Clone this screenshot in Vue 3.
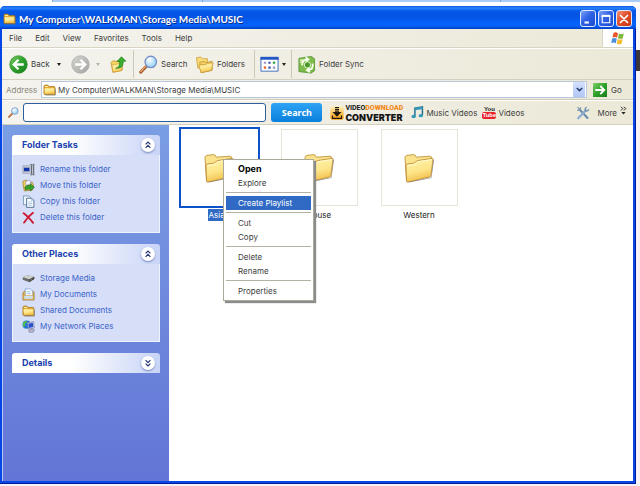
<script setup>
import { ref } from 'vue'

const path = 'My Computer\\WALKMAN\\Storage Media\\MUSIC'
const address = ref(path)
const query = ref('')
const menus = ['File', 'Edit', 'View', 'Favorites', 'Tools', 'Help']
const panels = [
  {
    title: 'Folder Tasks',
    open: true,
    items: [
      { icon: 'rename', label: 'Rename this folder' },
      { icon: 'move', label: 'Move this folder' },
      { icon: 'copy', label: 'Copy this folder' },
      { icon: 'delete', label: 'Delete this folder' },
    ],
  },
  {
    title: 'Other Places',
    open: true,
    items: [
      { icon: 'drive', label: 'Storage Media' },
      { icon: 'docs', label: 'My Documents' },
      { icon: 'folder', label: 'Shared Documents' },
      { icon: 'network', label: 'My Network Places' },
    ],
  },
  { title: 'Details', open: false, items: [] },
]
const folders = [
  { name: 'Asian', selected: true },
  { name: 'House', selected: false },
  { name: 'Western', selected: false },
]
const contextMenu = [
  [{ label: 'Open', bold: true }, { label: 'Explore' }],
  [{ label: 'Create Playlist', active: true }],
  [{ label: 'Cut' }, { label: 'Copy' }],
  [{ label: 'Delete' }, { label: 'Rename' }],
  [{ label: 'Properties' }],
]
</script>

<template>
  <div class="desktop">
    <svg class="defs" width="0" height="0" aria-hidden="true">
      <defs>
        <linearGradient id="gold" x1="0" y1="0" x2="0.3" y2="1">
          <stop offset="0" stop-color="#fff6b0" />
          <stop offset="0.6" stop-color="#fde58a" />
          <stop offset="1" stop-color="#f2c14c" />
        </linearGradient>
        <linearGradient id="green" x1="0" y1="0" x2="1" y2="1">
          <stop offset="0" stop-color="#7fd067" />
          <stop offset="0.5" stop-color="#2fa02c" />
          <stop offset="1" stop-color="#15801a" />
        </linearGradient>
        <linearGradient id="grey" x1="0" y1="0" x2="1" y2="1">
          <stop offset="0" stop-color="#d6d6d2" />
          <stop offset="1" stop-color="#a3a3a0" />
        </linearGradient>
        <linearGradient id="orange" x1="0" y1="0" x2="0" y2="1">
          <stop offset="0" stop-color="#fff0b8" />
          <stop offset="1" stop-color="#f79a08" />
        </linearGradient>
        <radialGradient id="lens" cx="0.4" cy="0.35" r="0.7">
          <stop offset="0" stop-color="#f4fcff" />
          <stop offset="1" stop-color="#8fccf5" />
        </radialGradient>
        <symbol id="i-folder" viewBox="0 0 14 14">
          <path d="M1 4Q1 2.2 2.3 2.2H5.2L6.5 3.7H12Q12.8 3.7 12.8 4.6V11.5Q12.8 12.4 12 12.4H2Q1 12.4 1 11.4Z" fill="#e3a838" stroke="#9b6a12" stroke-width=".7" />
          <path d="M1.6 5.6H12.2V11.7H2.2Z" fill="url(#gold)" />
          <path d="M2 3.2H5L5.8 4.3H2Z" fill="#fff0a0" />
          <path d="M2.5 13H13.4V6" fill="none" stroke="#77705a" stroke-width=".7" />
        </symbol>
        <symbol id="i-bigfolder" viewBox="0 0 32 32">
          <path d="M6 30.5 28.5 26 31 8 30 7 28 25.5 5 29.6Z" fill="#6f7392" opacity=".75" />
          <path d="M2 5.6Q2 3.8 4 3.4L10.5 2.6Q12.5 2.5 13.3 5.2L27 4.2Q28.6 4.2 28.5 6L26.8 23 3.5 29Z" fill="#fae38c" stroke="#b98a2a" stroke-width=".8" />
          <path d="M3 13.5 4.2 12 10.5 11.3 14.6 8.6 29.2 6.3Q30.2 6.3 30 7.4L27.9 23.6Q27.7 24.6 26.8 24.9L5 30Q3.7 30.2 3.6 29Z" fill="url(#gold)" stroke="#b7832a" stroke-width=".8" />
          <path d="M4.2 13.6 11 12.4 15 9.7 28.8 7.6" fill="none" stroke="#fffbd6" stroke-width=".9" />
        </symbol>
        <symbol id="i-rename" viewBox="0 0 14 14">
          <path d="M1 3H9V11H1Z" fill="#d4d5db" stroke="#858999" stroke-width=".7" />
          <path d="M2 5H8V9H2Z" fill="#1434a8" />
          <path d="M9 1.5H13.4V12.8H9" fill="#c9ccd6" />
          <path d="M9 1.5H10.5L11.2 2.3 12 1.5H13.4M9 12.8H10.5L11.2 12 12 12.8H13.4M10.3 2.3V12M12.6 2.3V12" fill="none" stroke="#4a4e5e" stroke-width=".9" />
        </symbol>
        <symbol id="i-move" viewBox="0 0 14 14">
          <path d="M1 5V2.5L4.5 1 6.5 3 11 3.5 12.5 7 11 12 2.5 12.8Z" fill="#f6cf58" stroke="#8a7026" stroke-width=".7" />
          <path d="M4 3 8 1 10 5 4 7Z" fill="#f4f6ff" stroke="#7588bb" stroke-width=".6" />
          <path d="M3 9Q5 6 9 7V5L13.4 9 9 13V11Q6 10.5 4 12Z" fill="#35a12d" stroke="#136416" stroke-width=".6" />
        </symbol>
        <symbol id="i-copy" viewBox="0 0 14 14">
          <path d="M1.5 1H7.5L9 2.5V10.5H1.5Z" fill="#eef6ff" stroke="#5a83a3" stroke-width=".8" />
          <path d="M5 3.5H10.5L12.8 5.8V13.3H5Z" fill="#fff" stroke="#375e85" stroke-width=".9" />
          <path d="M10.3 3.8V6H12.6M6.7 7.5H11M6.7 9.2H11M6.7 11H11" fill="none" stroke="#7fb0d8" stroke-width=".7" />
        </symbol>
        <symbol id="i-delete" viewBox="0 0 14 14">
          <path d="M1.8 2.5Q5.5 5 12 12.7M11.8 2Q6.5 6 2.3 12.5" fill="none" stroke="#cd1733" stroke-width="2" stroke-linecap="round" />
        </symbol>
        <symbol id="i-drive" viewBox="0 0 14 14">
          <path d="M.8 5.7 6 3.5 13.2 5.2V7.6L8 11 .8 8.3Z" fill="#6c6c6a" />
          <path d="M.8 5.7 6 3.5 13.2 5.2 8 7.9Z" fill="#d0d0cc" />
          <path d="M8 8 13.2 5.3V7.5L8 10.7Z" fill="#3d3d3d" />
          <path d="M9 9 11 7.9" stroke="#8ec68b" stroke-width=".8" />
        </symbol>
        <symbol id="i-docs" viewBox="0 0 14 14">
          <path d="M1 5 3 3.3H12L13 5V13H1Z" fill="#e9b54c" stroke="#98691a" stroke-width=".7" />
          <path d="M3.5 1H9L11.5 3.4V9.5H3.5Z" fill="#f8fcff" stroke="#6d9bc6" stroke-width=".7" />
          <path d="M5 4H9.5M5 6H9.5" stroke="#8db9dd" stroke-width=".8" />
          <path d="M2 8H12V12.2H2Z" fill="#cfe0ee" stroke="#d2a03f" stroke-width=".7" />
        </symbol>
        <symbol id="i-network" viewBox="0 0 14 14">
          <circle cx="5" cy="5" r="4.4" fill="#2575db" />
          <path d="M1.2 3Q3 .8 5.5.8L5 3 3.2 4 3.5 6.5 2 7.5Q.4 5.5 1.2 3Z" fill="#4fbf4d" />
          <path d="M5.5 3 12.5 1.8 13.2 8.6 7 9.8Z" fill="#dcdcea" stroke="#5c6490" stroke-width=".6" />
          <path d="M6.6 4 11.7 3 12.2 7.6 7.5 8.5Z" fill="#2b50d0" />
          <path d="M7 11 10 9.5 13.4 10.5 12 13.2 8 13.4Z" fill="#b4b4cd" stroke="#70708e" stroke-width=".5" />
        </symbol>
        <symbol id="i-search" viewBox="0 0 20 20">
          <path d="M1.8 18 8 11.5" stroke="#9d5b32" stroke-width="3.2" stroke-linecap="round" />
          <path d="M1.8 17.4 7.4 11.4" stroke="#eca06b" stroke-width="1.5" stroke-linecap="round" />
          <circle cx="12.4" cy="7.3" r="6" fill="url(#lens)" stroke="#7690c8" stroke-width="1.4" />
          <path d="M8.7 6.4Q9.7 3.4 13 3.4" fill="none" stroke="#fff" stroke-width="1.3" />
        </symbol>
      </defs>
    </svg>

    <div class="behind"><span></span><span></span><span></span><span></span></div>

    <main class="window">
      <header class="titlebar">
        <svg class="ic13"><use href="#i-folder" /></svg>
        <h1>{{ path }}</h1>
        <div class="winbtns">
          <button aria-label="Minimize"><svg viewBox="0 0 16 16"><path d="M4 12H9" stroke="#fff" stroke-width="2.4" /></svg></button>
          <button aria-label="Maximize"><svg viewBox="0 0 16 16"><path d="M3.7 4.5V12.3H12.3V4.5" fill="none" stroke="#fff" stroke-width="1.3" /><path d="M3 4.4H13" stroke="#fff" stroke-width="2.4" /></svg></button>
          <button class="close" aria-label="Close"><svg viewBox="0 0 16 16"><path d="M4 4 12 12M12 4 4 12" stroke="#fff" stroke-width="2" stroke-linecap="round" /></svg></button>
        </div>
      </header>

      <div class="body">
        <nav class="menubar">
          <button v-for="m in menus" :key="m">{{ m }}</button>
          <div class="flag">
            <svg viewBox="0 0 18 16">
              <path d="M4 1.5Q6.5.3 9 2L7.9 7.2Q5.5 5.8 2.8 6.9Z" fill="#e8562a" />
              <path d="M10 2.3Q12.5 3.8 15.5 2.4L14.4 7.6Q11.7 8.9 9 7.6Z" fill="#7db83c" />
              <path d="M2.5 7.9Q5 6.8 7.6 8.3L6.5 13.4Q4.1 12 1.3 13.1Z" fill="#4a8fdc" />
              <path d="M8.7 8.7Q11.3 10 14.2 8.7L13 13.9Q10.2 15.2 7.6 13.8Z" fill="#f6bd30" />
            </svg>
          </div>
        </nav>

        <div class="toolbar">
          <button class="tool back">
            <svg class="ic19" viewBox="0 0 20 20"><circle cx="10" cy="10" r="9.2" fill="url(#green)" stroke="#2a8a2b" stroke-width=".8" /><path d="M15.5 10H5.8M10 5 5 10 10 15" fill="none" stroke="#fff" stroke-width="2.5" /></svg>
            <span>Back</span><i class="caret"></i>
          </button>
          <button class="tool forward" aria-label="Forward">
            <svg class="ic19" viewBox="0 0 20 20"><circle cx="10" cy="10" r="9.2" fill="url(#grey)" stroke="#aaa" stroke-width=".8" /><path d="M4.5 10H14.2M10 5 15 10 10 15" fill="none" stroke="#fff" stroke-width="2.5" /></svg>
            <i class="caret dim"></i>
          </button>
          <button class="tool up" aria-label="Up">
            <svg class="ic17" viewBox="0 0 18 18"><path d="M1 7 3 5 7 5.5 13 6V15L3 17.3Z" fill="#f6d360" stroke="#b88b28" stroke-width=".7" /><path d="M2.2 9.5 11 8 13.5 9 11.5 16 3 17Z" fill="url(#gold)" stroke="#c49935" stroke-width=".6" /><path d="M6 13Q10.5 12.5 10.3 5.8H7.3L12.2.8 16.8 5.5H14Q14.5 13.5 6 13Z" fill="#3aae30" stroke="#187b1c" stroke-width=".7" /></svg>
          </button>
          <button class="tool search"><svg class="ic19"><use href="#i-search" /></svg><span>Search</span></button>
          <button class="tool folders">
            <svg class="ic19" viewBox="0 0 20 20"><path d="M1.5 3 6 2 8 4 13 3.8V12L3 14Z" fill="#f8dc78" stroke="#c99a36" stroke-width=".8" /><path d="M5 7.5 9.5 7 11.5 8 18 6.5V16L6.5 18.5Z" fill="#f5d367" stroke="#c08c28" stroke-width=".8" /><path d="M4 10.5 11 10 13 8.8 19 8.2 17.3 16.3 6.3 18.7Z" fill="url(#gold)" stroke="#c49335" stroke-width=".8" /></svg>
            <span>Folders</span>
          </button>
          <button class="tool views" aria-label="Views">
            <svg class="ic19" viewBox="0 0 20 20"><path d="M1 2.5H19V17H1Z" fill="#fff" stroke="#3b69b8" /><path d="M.5 2H19.5V5H.5Z" fill="#2459c4" /><path d="M4 7H6.4V9.2H4ZM13.5 12H16V14.5H13.5Z" fill="#9a93c2" /><path d="M8.8 7H11.2V9.2H8.8ZM8.8 12H11.2V14.5H8.8Z" fill="#3550b8" /><path d="M13.5 7H16V9.2H13.5Z" fill="#2e9b39" /><path d="M4 12H6.4V14.5H4Z" fill="#e8622e" /></svg>
            <i class="caret"></i>
          </button>
          <button class="tool sync">
            <svg class="ic19" viewBox="0 0 20 20"><path d="M2 3.5 15 1.5 18.5 4V16.5L15 19 2 17.5Z" fill="#7fbb4c" stroke="#4f8f2b" stroke-width=".8" /><path d="M3 4.5 7 4V8L3 8.5Z" fill="#c9e6a5" /><path d="M5.5 11Q5 5.2 11 4.6M9 2.5 12 4.6 9.5 7M16.5 9Q17.5 15 11.5 16M13.5 18 10.5 16 13 13.5" fill="none" stroke="#f5ffe9" stroke-width="2" /><circle cx="11" cy="10.4" r="3.3" fill="#4b982e" stroke="#e8f8d5" /></svg>
            <span>Folder Sync</span>
          </button>
        </div>

        <form class="address" @submit.prevent>
          <label for="addr">Address</label>
          <div class="combo">
            <svg class="ic13"><use href="#i-folder" /></svg>
            <input id="addr" v-model="address" type="text" />
            <button type="button" aria-label="Show addresses"><svg viewBox="0 0 10 10"><path d="M2 3.3 5 6.3 8 3.3" fill="none" stroke="#29406f" stroke-width="1.8" /></svg></button>
          </div>
          <button class="go"><svg viewBox="0 0 14 14"><path d="M0 0H14V14H0Z" fill="url(#green)" /><path d="M2.3 7H11M7.3 3 11.3 7 7.3 11" fill="none" stroke="#fff" stroke-width="1.8" /></svg><span>Go</span></button>
        </form>

        <form class="searchbar" @submit.prevent>
          <svg class="mag"><use href="#i-search" /></svg>
          <input v-model="query" type="text" aria-label="Search the web" />
          <button class="submit">Search</button>
          <a class="converter" href="#">
            <svg viewBox="0 0 14 14"><rect x=".3" y=".3" width="13.4" height="13.4" rx="2.5" fill="url(#orange)" /><path d="M5 1.5H9M5 3.4H9M5 5.1H9" stroke="#20180c" stroke-width="1.2" /><path d="M2.5 6H11.5L7 10.8Z" fill="#20180c" /><path d="M2.5 9.5V12.4H11.5V9.5" fill="none" stroke="#20180c" stroke-width="1.2" /></svg>
            <span class="words"><span class="l1">VIDEO<b>DOWNLOAD</b></span><span class="l2">CONVERTER</span></span>
          </a>
          <a class="link music" href="#">
            <svg viewBox="0 0 14 14"><path d="M4.2 10.8V2.2L12.3 1V9.7" fill="none" stroke="#227292" stroke-width="1.6" /><path d="M4.2 2 12.3.8V3.4L4.2 4.6Z" fill="#3a9abb" /><ellipse cx="2.9" cy="11.3" rx="2.4" ry="1.8" fill="#3699ba" /><ellipse cx="10.6" cy="10.4" rx="2.4" ry="1.8" fill="#3699ba" /></svg>
            <span>Music Videos</span>
          </a>
          <a class="link videos" href="#"><span class="yt"><span>You</span><b>Tube</b></span><span>Videos</span></a>
          <button class="wrench" type="button" aria-label="Options"><svg viewBox="0 0 14 14"><path d="M3.5 3.5 11.5 12" stroke="#6689ad" stroke-width="2" stroke-linecap="round" /><path d="M1.5 1.2 4.5 4.4M4.4 1.2Q5.5 4.5 1.2 4.4" fill="none" stroke="#8198b0" stroke-width="1.2" /><path d="M10 4.3 2.2 12.2" stroke="#8eacd0" stroke-width="2.3" stroke-linecap="round" /><path d="M10.7 1Q8.4 2.4 9.2 4.8 11.6 5.7 13 3.4" fill="none" stroke="#7894b7" stroke-width="1.3" /></svg></button>
          <button class="more" type="button">More<svg viewBox="0 0 7 9"><path d="M1 .8 2.8 2.6 1 4.4M4 .8 5.8 2.6 4 4.4" fill="none" stroke="#222" /><path d="M1.4 6H5.6L3.5 8.4Z" fill="#222" /></svg></button>
        </form>

        <div class="content">
          <aside>
            <section v-for="p in panels" :key="p.title" class="panel">
              <h2>{{ p.title }}
                <button :aria-label="'Toggle ' + p.title">
                  <svg viewBox="0 0 14 14"><path v-if="p.open" d="M4.6 6.4 7 4 9.4 6.4M4.6 9.8 7 7.4 9.4 9.8" /><path v-else d="M4.6 4.2 7 6.6 9.4 4.2M4.6 7.6 7 10 9.4 7.6" /></svg>
                </button>
              </h2>
              <ul v-if="p.open">
                <li v-for="i in p.items" :key="i.label">
                  <a href="#"><svg class="ic13"><use :href="'#i-' + i.icon" /></svg>{{ i.label }}</a>
                </li>
              </ul>
            </section>
          </aside>

          <div class="files">
            <figure v-for="f in folders" :key="f.name" :class="{ selected: f.selected }">
              <div class="thumb"><svg><use href="#i-bigfolder" /></svg></div>
              <figcaption><span>{{ f.name }}</span></figcaption>
            </figure>
            <div class="context" role="menu">
              <div v-for="(g, n) in contextMenu" :key="n" class="group">
                <button v-for="c in g" :key="c.label" role="menuitem" :class="{ bold: c.bold, active: c.active }">{{ c.label }}</button>
              </div>
            </div>
          </div>
        </div>
      </div>
    </main>
  </div>
</template>

<style>
body {
  margin: 0;
  background: #f4f2f8;
}
</style>

<style scoped>
* {
  box-sizing: border-box;
}
.desktop {
  display: flex;
  flex-direction: column;
  min-height: 100vh;
  padding: 0 4px 2px 0;
  background: linear-gradient(#f8f8fc 50px, #39363c 50px, #39363c 71px, #f4f2f8 71px);
  font: 8px/14px Inter, "Noto Sans", sans-serif;
  color: #3d3d3d;
}
.defs {
  position: absolute;
}
button {
  padding: 0;
  border: 0;
  background: none;
  font: inherit;
  color: inherit;
}
input {
  min-width: 0;
  padding: 0;
  border: 0;
  outline: 0;
  background: none;
  font: inherit;
  color: inherit;
}
a {
  color: inherit;
  text-decoration: none;
}
svg {
  display: block;
  flex: none;
}
.ic13 {
  width: 13px;
  height: 13px;
}
.ic17 {
  width: 17px;
  height: 17px;
}
.ic19 {
  width: 19px;
  height: 19px;
}
.behind {
  display: grid;
  grid-template-columns: 52px 150px 298px 1fr;
  height: 6px;
  margin-right: -4px;
  background: #fff;
}
.behind span {
  height: 2px;
  border-left: 1px solid #7fa5d4;
  background: #a9cdf8;
}
.behind span:first-child {
  border: 0;
  background: #fff;
}
.window {
  display: flex;
  flex: 1;
  flex-direction: column;
  border-radius: 5px 5px 0 0;
  background: #0546e6;
  box-shadow: inset -1px -1px #001a9c;
}
.titlebar {
  display: flex;
  align-items: center;
  height: 23px;
  padding: 2px 4px 0 3px;
  border-radius: 5px 5px 0 0;
  background: linear-gradient(#0a5be0, #2b83ff 2px, #0458e8 5px, #0453e2 10px, #0463fb 18px, #0560f6 20px, #0240c4);
}
.titlebar h1 {
  flex: 1;
  margin: 0 0 0 3px;
  font: bold 10px/14px Lato, "Open Sans", sans-serif;
  color: #fff;
  text-shadow: 1px 1px #0a2a8a;
  white-space: nowrap;
}
.winbtns {
  display: flex;
  gap: 2px;
}
.winbtns button {
  width: 16px;
  height: 17px;
  border: 1px solid #dfe8ff;
  border-radius: 3px;
  background: linear-gradient(135deg, #7da2f6, #2f62e4 45%, #1d4bd0);
}
.winbtns .close {
  background: linear-gradient(135deg, #f0957a, #e0502c 45%, #c2350e);
}
.body {
  display: flex;
  flex: 1;
  flex-direction: column;
  margin: 0 3px 3px 2px;
  background: linear-gradient(90deg, #f4f3ee, #ece9d8);
}
.menubar {
  display: flex;
  height: 19px;
  padding-left: 7px;
  border-bottom: 1px solid #d8d4c3;
}
.menubar > button {
  margin-right: 13px;
}
.flag {
  display: grid;
  place-items: center;
  width: 31px;
  margin-left: auto;
  border-left: 1px solid #d8d4c3;
  background: #fff;
}
.flag svg {
  width: 16px;
  height: 15px;
}
.toolbar {
  display: flex;
  align-items: center;
  height: 32px;
  border-top: 1px solid #fff;
  border-bottom: 1px solid #d3d0c0;
}
.tool {
  display: flex;
  align-items: center;
  gap: 3px;
  height: 28px;
}
.caret {
  border: 2px solid transparent;
  border-top: 3px solid #222;
  border-bottom: 0;
}
.caret.dim {
  border-top-color: #b5b3a9;
}
.back {
  width: 63px;
  padding-left: 7px;
}
.back .caret {
  margin-left: 4px;
}
.forward {
  gap: 6px;
  width: 45px;
  padding-left: 6px;
}
.up {
  width: 23px;
}
.search {
  width: 58px;
  padding-left: 5px;
  border-left: 1px solid #cbc8b8;
}
.folders {
  width: 63px;
  padding-left: 4px;
}
.views {
  width: 37px;
  padding-left: 5px;
  border-left: 1px solid #cbc8b8;
}
.sync {
  padding-left: 5px;
  border-left: 1px solid #cbc8b8;
}
.address {
  display: flex;
  align-items: center;
  height: 20px;
  padding-left: 4px;
  border-bottom: 1px solid #cfccbb;
}
.address label {
  width: 35px;
  color: #8c8a80;
}
.combo {
  display: flex;
  flex: 1;
  align-items: center;
  gap: 2px;
  height: 17px;
  padding: 0 1px;
  border: 1px solid #b9c7dc;
  background: #fff;
}
.combo input {
  flex: 1;
}
.combo button {
  display: grid;
  place-items: center;
  width: 12px;
  height: 15px;
  border-radius: 1px;
  background: linear-gradient(#d3e0fd, #b0c7f5);
}
.combo button svg {
  width: 9px;
  height: 9px;
}
.go {
  display: flex;
  align-items: center;
  gap: 4px;
  width: 46px;
  padding-left: 6px;
}
.go svg {
  width: 14px;
  height: 14px;
}
.searchbar {
  display: flex;
  align-items: center;
  height: 25px;
  padding: 0 6px;
  border-top: 1px solid #fff;
  border-bottom: 1px solid #d3d0be;
}
.mag {
  width: 11px;
  height: 11px;
}
.searchbar input {
  flex: 1;
  height: 19px;
  margin-left: 4px;
  border: 1px solid #2c5f9c;
  border-radius: 3px;
  background: #fff;
}
.submit {
  width: 51px;
  height: 19px;
  margin-left: 5px;
  border-radius: 3px;
  background: linear-gradient(#2ea4f4, #0a7fdc);
  font: bold 9px/18px "Noto Sans", sans-serif;
  color: #fff;
}
.converter {
  display: flex;
  align-items: center;
  gap: 1px;
  width: 81px;
  margin-left: 8px;
}
.converter svg {
  width: 14px;
  height: 14px;
}
.words {
  display: flex;
  flex-direction: column;
  color: #151515;
}
.l1 {
  font: bold 7px/9px Roboto, sans-serif;
}
.l1 b {
  color: #f58a1c;
}
.l2 {
  font: 900 9px/9px Inter, sans-serif;
}
.link {
  display: flex;
  align-items: center;
  gap: 2px;
  white-space: nowrap;
}
.link svg {
  width: 13px;
  height: 13px;
}
.music {
  width: 71px;
}
.yt {
  display: flex;
  flex-direction: column;
  align-items: center;
  width: 14px;
  font: bold 6px/6px "Liberation Sans", sans-serif;
  color: #222;
}
.yt b {
  width: 14px;
  border-radius: 2px;
  background: #e8222a;
  line-height: 7px;
  text-align: center;
  color: #fff;
}
.wrench {
  margin-left: 52px;
}
.wrench svg {
  width: 14px;
  height: 14px;
}
.more {
  display: flex;
  gap: 3px;
  margin-left: 7px;
}
.more svg {
  width: 7px;
  height: 9px;
}
.content {
  display: flex;
  flex: 1;
  background: #fff;
}
aside {
  display: flex;
  flex-direction: column;
  gap: 11px;
  width: 167px;
  padding: 10px 9px;
  border-left: 1px solid #b9c8f2;
  background: linear-gradient(#7a9ee4, #6375d6);
}
.panel h2 {
  display: flex;
  align-items: center;
  justify-content: space-between;
  height: 20px;
  margin: 0;
  padding: 0 5px 0 10px;
  border-radius: 3px 3px 0 0;
  background: linear-gradient(90deg, #fff 40%, #c8d4f7);
  font-size: 9px;
  font-weight: bold;
  color: #1b3fae;
}
.panel h2 button {
  width: 14px;
  height: 14px;
  border-radius: 50%;
  background: #fff;
  box-shadow: 0 1px 2px #7287bc;
}
.panel h2 path {
  fill: none;
  stroke: #26366f;
  stroke-width: 1.2;
}
.panel ul {
  margin: 0;
  padding: 6px 9px 7px;
  border: 1px solid #eef2ff;
  border-top: 0;
  background: #d6dff7;
  list-style: none;
}
.panel a {
  display: flex;
  align-items: center;
  gap: 5px;
  height: 16px;
  color: #3b63cb;
}
.files {
  position: relative;
  display: grid;
  flex: 1;
  grid-template-columns: repeat(auto-fill, 100px);
  align-content: start;
  padding-top: 2px;
}
figure {
  display: flex;
  flex-direction: column;
  align-items: center;
  margin: 0;
  color: #222;
}
.thumb {
  display: grid;
  place-items: center;
  width: 77px;
  height: 77px;
  margin: 2px;
  border: 1px solid #e6e4d4;
}
.thumb svg {
  width: 32px;
  height: 32px;
}
.selected .thumb {
  width: 81px;
  height: 81px;
  margin: 0;
  border: 2px solid #0d52c9;
}
figcaption {
  display: flex;
  padding-top: 1px;
  line-height: 12px;
}
.selected figcaption span {
  padding: 0 1px;
  background: #316ac5;
  color: #fff;
}
.context {
  position: absolute;
  top: 34px;
  left: 54px;
  width: 91px;
  padding: 2px;
  border: 1px solid #aca899;
  background: #fff;
  box-shadow: 2px 2px 1px #8c8c8c;
}
.group + .group {
  margin-top: 2px;
  padding-top: 3px;
  border-top: 1px solid #b5b2a5;
}
.context button {
  display: block;
  width: 100%;
  height: 14px;
  padding-left: 12px;
  text-align: left;
}
.context .bold {
  font-size: 9px;
  font-weight: bold;
  color: #000;
}
.context .active {
  background: #316ac5;
  color: #fff;
}
</style>
